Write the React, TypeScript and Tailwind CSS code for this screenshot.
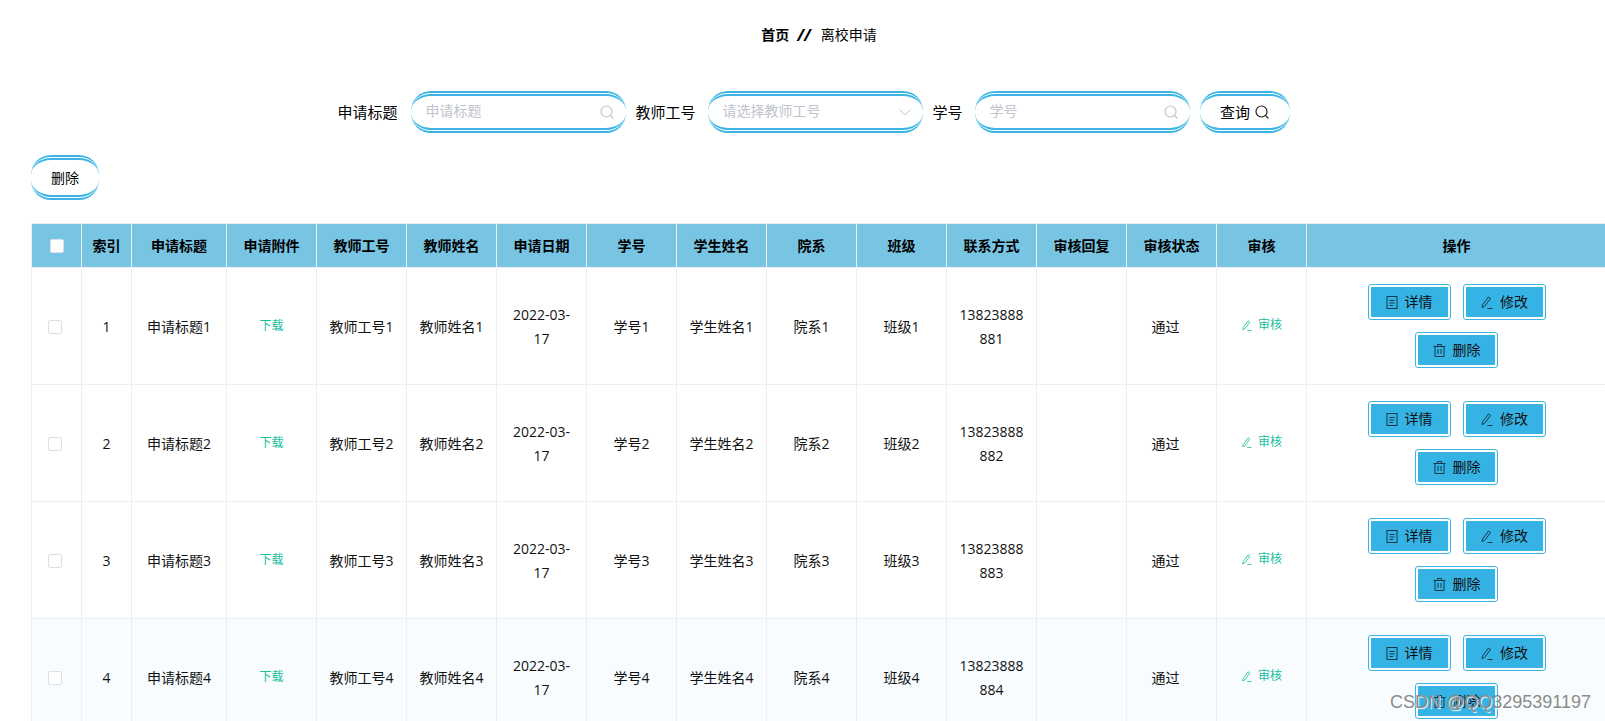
const SearchIcon = ({ className }: { className: string }) => (
  <svg viewBox="0 0 14 14" fill="none" stroke="currentColor" strokeWidth="1.2" className={className}>
    <circle cx="6.5" cy="6.5" r="5.5" />
    <path d="M10.6 10.6 L13 13" strokeLinecap="round" />
  </svg>
);

const DocIcon = () => (
  <svg viewBox="0 0 12 13" fill="none" stroke="currentColor" strokeWidth="1" className="w-3 h-[13px]">
    <rect x="1" y="0.5" width="10" height="12" />
    <path d="M3.5 4.5 H8.5 M3.5 7 H8.5 M3.5 9.5 H7" />
  </svg>
);

const EditIcon = ({ className }: { className: string }) => (
  <svg viewBox="0 0 13 13" fill="none" stroke="currentColor" strokeWidth="1" className={className}>
    <path d="M2.5 9 L8.5 1 L10.5 2.5 L4.5 10.5 L2 11.5 Z" />
    <path d="M7.5 12.5 H12.5" />
  </svg>
);

const TrashIcon = () => (
  <svg viewBox="0 0 13 13" fill="none" stroke="currentColor" strokeWidth="1" className="w-[13px] h-[13px]">
    <path d="M0.5 2.5 H12.5 M4.5 2.5 V0.5 H8.5 V2.5 M2 2.5 V12.5 H11 V2.5 M5 5 V10 M8 5 V10" />
  </svg>
);

const pillClass =
  "border-y-[5px] border-x-0 border-double border-[#3ab5e6] rounded-[20px] bg-white";

const FilterInput = ({ placeholder, width }: { placeholder: string; width: string }) => (
  <div className={`${pillClass} h-[42px] ${width} flex items-center pl-[15px] pr-[12px]`}>
    <input
      placeholder={placeholder}
      className="flex-1 min-w-0 pb-[2px] outline-none text-sm placeholder:text-[#c0c4cc]"
    />
    <SearchIcon className="w-[14px] h-[14px] text-[#c0c4cc]" />
  </div>
);

const ActionButton = ({ icon, label }: { icon: React.ReactNode; label: string }) => (
  <button className="w-[83px] h-9 flex items-center justify-center gap-[7px] border-4 border-double border-[#3ab5e6] rounded-[3px] bg-[#36b3e5] bg-clip-padding text-sm text-[#111]">
    <span className="text-[#123a4d]">{icon}</span>
    {label}
  </button>
);

const headers = [
  "索引",
  "申请标题",
  "申请附件",
  "教师工号",
  "教师姓名",
  "申请日期",
  "学号",
  "学生姓名",
  "院系",
  "班级",
  "联系方式",
  "审核回复",
  "审核状态",
  "审核",
  "操作",
];

const colWidths = [
  "w-[50px]",
  "w-[50px]",
  "w-[95px]",
  "w-[90px]",
  "w-[90px]",
  "w-[90px]",
  "w-[90px]",
  "w-[90px]",
  "w-[90px]",
  "w-[90px]",
  "w-[90px]",
  "w-[90px]",
  "w-[90px]",
  "w-[90px]",
  "w-[90px]",
  "w-[300px]",
];

const rows = [1, 2, 3, 4];

const App = () => {
  const cell = "border border-[#ebeef5] px-[10px] pt-[2px] text-center text-sm leading-6 text-[#111]";

  return (
    <div
      className="h-[721px] w-full overflow-hidden relative bg-white text-black"
      style={{ fontFamily: '"Open Sans", "Noto Sans CJK SC", sans-serif' }}
    >
      <div className="h-[91px] pt-[24px] pl-[33px] flex justify-center text-sm leading-[22px]">
        <span className="font-bold">首页</span>
        <span className="font-bold italic text-[16px] ml-[8px]">//</span>
        <span className="ml-[10px]">离校申请</span>
      </div>

      <div className="flex justify-center items-center pl-[22px] text-[15px]">
        <span className="mr-[13px]">申请标题</span>
        <FilterInput placeholder="申请标题" width="w-[215px]" />
        <span className="ml-[10px] mr-[12px]">教师工号</span>
        <div className={`${pillClass} h-[42px] w-[215px] flex items-center justify-between pl-[15px] pr-[12px]`}>
          <span className="text-sm text-[#c0c4cc] relative -top-px">请选择教师工号</span>
          <svg viewBox="0 0 12 7" fill="none" stroke="#c0c4cc" className="w-3 h-[7px]">
            <path d="M0.5 0.5 L6 6 L11.5 0.5" />
          </svg>
        </div>
        <span className="mx-[10px] w-[32px]">学号</span>
        <FilterInput placeholder="学号" width="w-[215px]" />
        <button className={`${pillClass} h-[42px] w-[90px] ml-[10px] flex items-center justify-center gap-[5px]`}>
          查询
          <SearchIcon className="w-[14px] h-[14px] text-[#222]" />
        </button>
      </div>

      <div className="pl-[31px] mt-[22px]">
        <button className={`${pillClass} h-[45px] w-[68px] text-sm`}>删除</button>
      </div>

      <table className="table-fixed border-collapse w-[1575px] ml-[31px] mt-[23px]">
        <colgroup>
          {colWidths.map((w, i) => (
            <col key={i} className={w} />
          ))}
        </colgroup>
        <thead>
          <tr className="h-[44px] bg-[#78c4e3]">
            <th className="border border-[#ebeef5]">
              <div className="w-[14px] h-[14px] ml-[18px] bg-white border border-[#dcdfe6] rounded-[2px]" />
            </th>
            {headers.map((h) => (
              <th key={h} className="border border-[#ebeef5] text-sm font-bold text-black">
                {h}
              </th>
            ))}
          </tr>
        </thead>
        <tbody>
          {rows.map((n) => (
            <tr key={n} className={n === 4 ? "h-[117px] bg-[#f8fcfe]" : "h-[117px]"}>
              <td className={cell}>
                <div className="w-[14px] h-[14px] ml-[6px] bg-white border border-[#dcdfe6] rounded-[2px]" />
              </td>
              <td className={cell}>{n}</td>
              <td className={cell}>申请标题{n}</td>
              <td className={`${cell} !text-xs !text-[#19be9d]`}>
                <span className="relative -top-px">下载</span>
              </td>
              <td className={cell}>教师工号{n}</td>
              <td className={cell}>教师姓名{n}</td>
              <td className={cell}>2022-03-17</td>
              <td className={cell}>学号{n}</td>
              <td className={cell}>学生姓名{n}</td>
              <td className={cell}>院系{n}</td>
              <td className={cell}>班级{n}</td>
              <td className={`${cell} break-all`}>1382388888{n}</td>
              <td className={cell}></td>
              <td className={`${cell} !pr-[22px]`}>通过</td>
              <td className={`${cell} !text-xs !text-[#19be9d]`}>
                <span className="relative -top-px inline-flex items-center gap-[6px]">
                  <EditIcon className="w-[11px] h-[11px]" />
                  审核
                </span>
              </td>
              <td className={`${cell} !px-[20px] !pt-0`}>
                <div className="flex flex-wrap justify-center gap-3">
                  <ActionButton icon={<DocIcon />} label="详情" />
                  <ActionButton icon={<EditIcon className="w-[13px] h-[13px]" />} label="修改" />
                  <ActionButton icon={<TrashIcon />} label="删除" />
                </div>
              </td>
            </tr>
          ))}
        </tbody>
      </table>

      <div
        className="absolute left-[1390px] top-[692px] text-[18px] leading-5 text-[#8a8a8a] [text-shadow:1px_1px_1px_#ffffff]"
        style={{ fontFamily: '"Liberation Sans", sans-serif' }}
      >
        CSDN @QQ3295391197
      </div>
    </div>
  );
};

export default App;
